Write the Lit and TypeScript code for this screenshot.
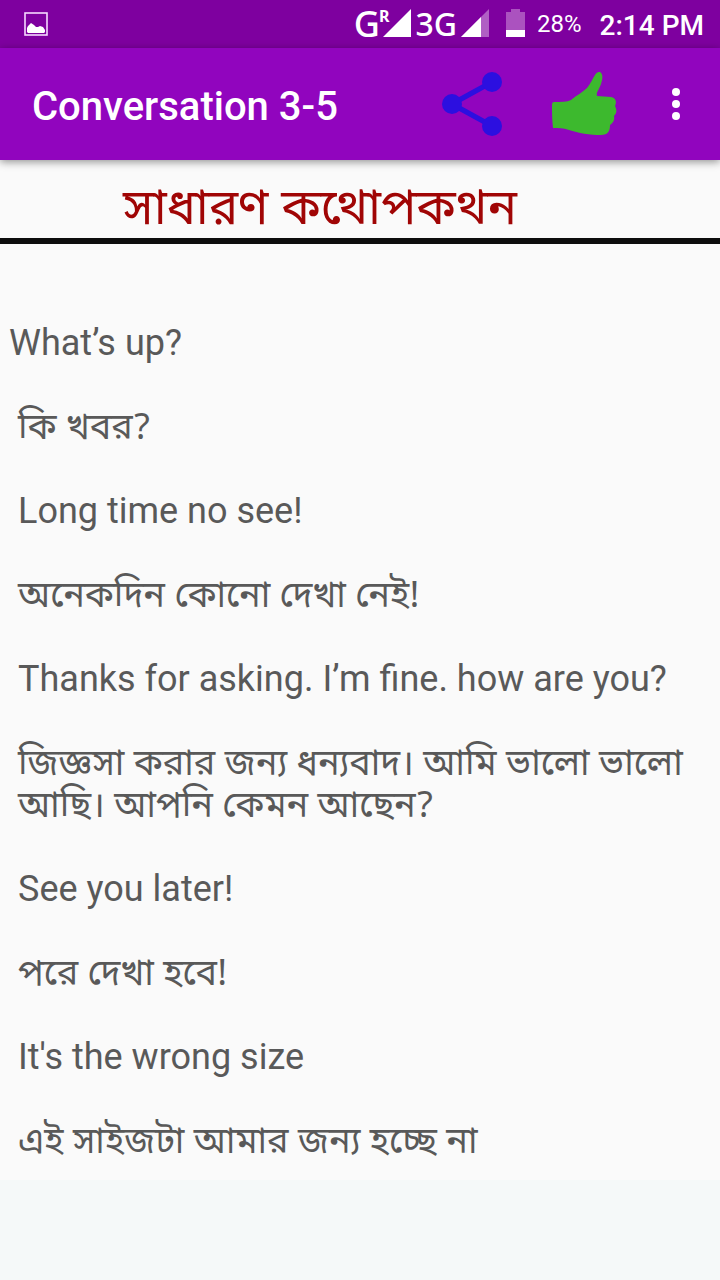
import { LitElement, html, css } from "lit";
import { customElement, property } from "lit/decorators.js";

interface Line {
  text: string;
  lang: "en" | "bn";
}

@customElement("status-bar")
class StatusBar extends LitElement {
  static styles = css`
    :host {
      display: flex;
      align-items: center;
      height: 48px;
      padding: 0 16px 0 24px;
      background: #7e009f;
      color: #fff;
      font-family: Roboto, sans-serif;
      white-space: nowrap;
    }
    svg {
      display: block;
      flex: none;
    }
    .right {
      display: flex;
      align-items: center;
      margin-left: auto;
    }
    .right svg {
      margin-bottom: 2px;
    }
    .net {
      display: flex;
      font-family: "Noto Sans", sans-serif;
      font-size: 36px;
      font-weight: 500;
      line-height: 48px;
    }
    .slim {
      font-size: 32px;
      margin: 0 4px;
    }
    .roam {
      font-size: 16px;
      font-weight: 700;
      line-height: 32px;
      margin: 0 -6px 0 -1px;
    }
    .battery {
      margin-left: 17px;
    }
    .percent {
      font-size: 24px;
      margin-left: 12px;
    }
    .clock {
      font-size: 28px;
      font-weight: 500;
      line-height: 32px;
      padding-top: 4px;
      margin-left: 18px;
    }
  `;

  render() {
    return html`
      <svg width="24" height="24" viewBox="0 0 24 24">
        <rect x="1" y="1" width="22" height="22" fill="none" stroke="#f6d9ff" stroke-width="1.6" />
        <path d="M3 20v-4l1-2 3-3 3 2 2 2h2l2-1 3 1 2 3v2l-1 1H4z" fill="#fff" />
      </svg>
      <div class="right">
        <span class="net">G<span class="roam">R</span></span>
        <svg width="28" height="28" viewBox="0 0 28 28"><path d="M0 28L28 0v28z" fill="#fff" /></svg>
        <span class="net slim">3G</span>
        <svg width="28" height="28" viewBox="0 0 28 28">
          <path d="M0 28L28 0v28z" fill="#b05fc4" />
          <path d="M0 28L20 8v20z" fill="#fff" />
        </svg>
        <svg class="battery" width="19" height="28" viewBox="0 0 19 28">
          <path d="M0 3h5V0h9v3h5v25H0z" fill="#ab52bf" />
          <path d="M0 21h19v7H0z" fill="#fff" />
        </svg>
        <span class="percent">28%</span>
        <span class="clock">2:14 PM</span>
      </div>
    `;
  }
}

@customElement("app-toolbar")
class AppToolbar extends LitElement {
  @property() heading = "";

  static styles = css`
    :host {
      display: flex;
      align-items: center;
      height: 112px;
      padding: 0 8px 0 32px;
      background: #9105be;
      box-shadow: 0 2px 8px rgba(0, 0, 0, 0.42);
      position: relative;
      box-sizing: border-box;
    }
    h1 {
      flex: 1;
      margin: 0;
      padding-top: 6px;
      color: #fff;
      font: 500 40px/48px Roboto, sans-serif;
      white-space: nowrap;
    }
    button {
      display: grid;
      place-items: center;
      height: 96px;
      padding: 0;
      border: 0;
      background: none;
    }
    .action {
      width: 112px;
    }
    .more {
      width: 72px;
    }
    svg {
      display: block;
    }
  `;

  render() {
    return html`
      <h1>${this.heading}</h1>
      <button class="action" aria-label="Share">
        <svg width="72" height="72" viewBox="0 0 72 72">
          <path d="M56 14L16 36l40 22" fill="none" stroke="#2c0fe0" stroke-width="5.4" />
          <g fill="#2c0fe0">
            <circle cx="56" cy="14" r="10" />
            <circle cx="16" cy="36" r="10" />
            <circle cx="56" cy="58" r="10" />
          </g>
        </svg>
      </button>
      <button class="action" aria-label="Like">
        <svg width="72" height="72" viewBox="0 -2 72 72">
          <path
            d="M4 35Q4 32 6 32C13 32 19 32 23 30C29 25 35 22 39 18C43 13 45 8 47 5C49 2 50 2 52 2C55 4 55 8 53 14C51 20 48 22 49 26L63 27C68 28 69 32 67 36C69 40 69 43 66 46C67 50 65 53 62 55C62 61 60 65 53 65C42 65 30 63 21 60C15 58 10 58 5 58C4 50 4 42 4 35Z"
            fill="#3db92e"
          />
        </svg>
      </button>
      <button class="more" aria-label="More options">
        <svg width="8" height="32" viewBox="0 0 8 32" fill="#fff">
          <circle cx="4" cy="4" r="4" />
          <circle cx="4" cy="16" r="4" />
          <circle cx="4" cy="28" r="4" />
        </svg>
      </button>
    `;
  }
}

@customElement("app-root")
class AppRoot extends LitElement {
  private lines: Line[] = [
    { text: "What’s up?", lang: "en" },
    { text: "কি খবর?", lang: "bn" },
    { text: "Long time no see!", lang: "en" },
    { text: "অনেকদিন কোনো দেখা নেই!", lang: "bn" },
    { text: "Thanks for asking. I’m fine. how are you?", lang: "en" },
    { text: "জিজ্ঞসা করার জন্য ধন্যবাদ। আমি ভালো ভালো আছি। আপনি কেমন আছেন?", lang: "bn" },
    { text: "See you later!", lang: "en" },
    { text: "পরে দেখা হবে!", lang: "bn" },
    { text: "It's the wrong size", lang: "en" },
    { text: "এই সাইজটা আমার জন্য হচ্ছে না", lang: "bn" },
  ];

  static styles = css`
    :host {
      display: flex;
      flex-direction: column;
      min-height: 100vh;
      background: #fafafa;
      color: #595959;
      font-family: Roboto, sans-serif;
    }
    h2 {
      margin: 0;
      padding: 20px 80px 2px 0;
      border-bottom: 6px solid #0d0d0d;
      color: #a00505;
      font-size: 49px;
      font-weight: 400;
      line-height: 56px;
      text-align: center;
    }
    main {
      flex: 1;
      display: flex;
      flex-direction: column;
      gap: 42px;
      padding: 78px 9px 0;
      font-size: 36px;
      line-height: 42px;
    }
    p {
      margin: 0;
      padding-left: 9px;
    }
    p:first-child {
      padding-left: 0;
    }
    /* Bengali runs sit on the Latin baseline and do not stretch the line */
    [lang="bn"] {
      font-family: "Noto Sans Bengali", "Noto Sans", sans-serif;
      line-height: 0;
    }
    footer {
      height: 100px;
      background: #f5f9f9;
    }
  `;

  render() {
    return html`
      <status-bar></status-bar>
      <app-toolbar heading="Conversation 3-5"></app-toolbar>
      <h2><span lang="bn">সাধারণ কথোপকথন</span></h2>
      <main>${this.lines.map((line) => html`<p><span lang=${line.lang}>${line.text}</span></p>`)}</main>
      <footer></footer>
    `;
  }
}
